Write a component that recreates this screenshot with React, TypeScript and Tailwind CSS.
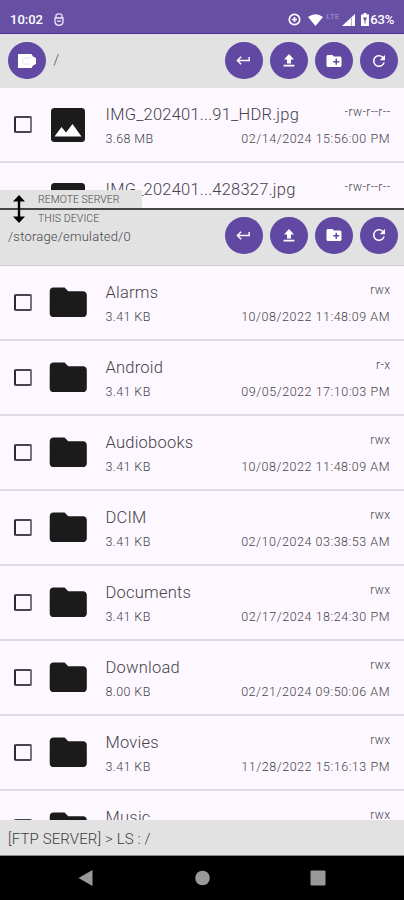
import { MdCreateNewFolder, MdFolder, MdKeyboardReturn, MdRefresh } from 'react-icons/md';

interface FileEntry {
    name: string;
    size: string;
    date: string;
    mode: string;
    isImage?: boolean;
}

const remoteFiles: FileEntry[] = [
    { name: 'IMG_202401...91_HDR.jpg', size: '3.68 MB', date: '02/14/2024 15:56:00 PM', mode: '-rw-r--r--', isImage: true },
    { name: 'IMG_202401...428327.jpg', size: '', date: '', mode: '-rw-r--r--', isImage: true },
];

const localFiles: FileEntry[] = [
    { name: 'Alarms', size: '3.41 KB', date: '10/08/2022 11:48:09 AM', mode: 'rwx' },
    { name: 'Android', size: '3.41 KB', date: '09/05/2022 17:10:03 PM', mode: 'r-x' },
    { name: 'Audiobooks', size: '3.41 KB', date: '10/08/2022 11:48:09 AM', mode: 'rwx' },
    { name: 'DCIM', size: '3.41 KB', date: '02/10/2024 03:38:53 AM', mode: 'rwx' },
    { name: 'Documents', size: '3.41 KB', date: '02/17/2024 18:24:30 PM', mode: 'rwx' },
    { name: 'Download', size: '8.00 KB', date: '02/21/2024 09:50:06 AM', mode: 'rwx' },
    { name: 'Movies', size: '3.41 KB', date: '11/28/2022 15:16:13 PM', mode: 'rwx' },
    { name: 'Music', size: '', date: '', mode: 'rwx' },
];

function ImageIcon() {
    return (
        <svg viewBox="0 0 34 34" className="w-[34px] h-[34px]">
            <rect width="34" height="34" rx="3.5" fill="#1b1b1b" />
            <path d="M3.500 28.500 10.500 19 15 24.500 21.500 16 30.500 28.500Z" fill="#fff" />
        </svg>
    );
}

function UploadIcon() {
    return (
        <svg viewBox="0 0 12 13" className="w-3 h-[13px]" fill="currentColor">
            <path d="M6 0 11 5.6H8V9.4H4V5.6H1ZM.6 10.8H11.4V12.6H.6Z" />
        </svg>
    );
}

function StatusBar() {
    return (
        <div className="h-[34px] shrink-0 bg-[#6750a4] border-b border-[#4b2f96] flex items-center pt-[6px] pl-[10px] pr-[10px] text-white">
            <span className="text-[13px] font-medium w-[44px]">10:02</span>
            <svg viewBox="0 0 10 13" className="w-[10px] h-[13px]" fill="none" stroke="#eee8fb" strokeWidth="1.300">
                <path d="M2 5V2.800Q2 .8 5 .8T8 2.800V5M1 5H9V9.500Q8 12.300 5 12.300T1 9.500ZM3 8.200H7" />
            </svg>
            <div className="ml-auto flex items-center">
                <svg viewBox="0 0 13 13" className="w-[13px] h-[13px] mr-[7px]" fill="none" stroke="#fff" strokeWidth="1.700">
                    <circle cx="6.500" cy="6.500" r="5.200" />
                    <path d="M6.500 4V9M4 6.500H9" />
                </svg>
                <svg viewBox="0 0 15 12" className="w-[15px] h-3 mr-[3px]" fill="#fff">
                    <path d="M0 3Q7.500 -2.500 15 3L7.500 12Z" />
                </svg>
                <span className="text-[8px] leading-3 text-[#a697cf] w-[16px] pb-[5px] font-normal tracking-[0.2px]">LTE</span>
                <svg viewBox="0 0 13 12" className="w-[13px] h-3 mr-[6px]">
                    <path d="M0 12 13 0V12Z" fill="#fff" />
                    <path d="M9.500 4V12" stroke="#b9add9" />
                </svg>
                <svg viewBox="0 0 8 13" className="w-2 h-[13px] mr-px">
                    <path d="M2.500 0H5.500V1.500H8V13H0V1.500H2.500Z" fill="#fff" />
                    <path d="M2 4.500H6L4.500 8V10.500H3.500V8Z" fill="#6750a4" />
                </svg>
                <span className="text-[13px] font-medium tracking-[-0.2px]">63%</span>
            </div>
        </div>
    );
}

const roundButton = 'w-[37.5px] h-[37.5px] rounded-full bg-[#6048a3] text-white flex items-center justify-center';

function Toolbar() {
    return (
        <div className="ml-auto flex gap-[7.5px]">
            <button className={roundButton}><MdKeyboardReturn size={17} /></button>
            <button className={roundButton}><UploadIcon /></button>
            <button className={roundButton}><MdCreateNewFolder size={18} /></button>
            <button className={roundButton}><MdRefresh size={18} /></button>
        </div>
    );
}

function FileRow({ file }: { file: FileEntry }) {
    return (
        <div className="h-[75px] shrink-0 border-b-2 border-[#e1dce3] flex items-center pl-[14px] pr-[14px] text-[#454347]">
            <span className="w-[18px] h-[17px] border-2 border-t-[#49454f] border-l-[#2b292d] border-r-[#77737a] border-b-[#49454f] rounded-[2px] shrink-0" />
            <span className="w-[45px] ml-[13.5px] flex justify-center shrink-0 text-[#1b1b1b]">
                {file.isImage ? <ImageIcon /> : <MdFolder size={44.500} />}
            </span>
            <div className="ml-[15px] flex-1 h-[49px] mt-[3px]">
                <div className="flex justify-between h-[25px]">
                    <span className="text-[16.500px] leading-[25px] tracking-[0.23px]">{file.name}</span>
                    <span className="text-[12px] leading-5 tracking-[0.400px] -mr-[0.500px]">{file.mode}</span>
                </div>
                <div className="flex justify-between text-[12.500px] leading-6">
                    <span className="tracking-[0.4px]">{file.size}</span>
                    <span className="tracking-[0.540px]">{file.date}</span>
                </div>
            </div>
        </div>
    );
}

export default function App() {
    return (
        <div className="w-[404px] h-[900px] flex flex-col overflow-hidden bg-[#fdf7ff] font-['Roboto',sans-serif] font-light">
            <StatusBar />

            <div className="h-[54px] shrink-0 bg-[#e2e2e2] flex items-center pl-2 pr-[6.5px] border-b border-[#e6e3e7] text-[#49474b]">
                <button className={roundButton}>
                    <svg viewBox="0 0 18 14" className="w-[18px] h-[14px]" fill="#fff">
                        <path d="M0 0H13.500L15 2.500 18 4V10L15 11.500 13.500 14H0Z" />
                        <path d="M13 4H6L4.500 5.500V8.500L6 10H12" fill="none" stroke="#e0d8f2" strokeWidth=".8" />
                    </svg>
                </button>
                <span className="ml-[8px] text-[14px]">/</span>
                <Toolbar />
            </div>

            <div className="relative h-[120px] shrink-0">
                <div className="h-full flex flex-col overflow-hidden">
                    {remoteFiles.map((file) => <FileRow key={file.name} file={file} />)}
                </div>
                <div className="absolute left-0 bottom-0 w-[142px] h-[18px] bg-[#e2e2e2] pl-[38px] text-[10.500px] leading-[20px] text-[#49474b]">
                    REMOTE SERVER
                </div>
                {/* drag handle between both panels */}
                <svg viewBox="0 0 12 28" className="absolute z-10 left-[13px] top-[107px] w-3 h-7" fill="#000">
                    <path d="M6 0 12 6.500H7.200V21.500H12L6 28 0 21.500H4.800V6.500H0Z" />
                </svg>
            </div>

            <div className="h-[58px] shrink-0 bg-[#e2e2e2] border-t-2 border-[#454545] border-b border-b-[#cbc8cc] flex pl-2 pr-[6.5px] text-[#49474b]">
                <div>
                    <div className="pl-[30px] text-[10.500px] leading-[17px] tracking-[0.1px]">THIS DEVICE</div>
                    <div className="text-[13px] leading-[20px] tracking-[0.2px]">/storage/emulated/0</div>
                </div>
                <div className="ml-auto pt-[6.500px]"><Toolbar /></div>
            </div>

            <div className="flex-1 min-h-0 flex flex-col overflow-hidden">
                {localFiles.map((file) => <FileRow key={file.name} file={file} />)}
            </div>

            <div className="h-9 shrink-0 bg-[#e2e2e2] border-b border-[#888] pl-2 text-[15px] leading-[38px] tracking-[0.12px] text-[#3c3b3e]">
                [FTP SERVER] &gt; LS : /
            </div>

            <div className="h-11 shrink-0 bg-black">
                <svg viewBox="0 0 404 44" className="w-full h-full" fill="#999">
                    <path d="M78.500 22 92.500 14V30Z" />
                    <circle cx="202.500" cy="22" r="7.300" />
                    <rect x="310.500" y="14.500" width="15" height="15" rx="1" />
                </svg>
            </div>
        </div>
    );
}
